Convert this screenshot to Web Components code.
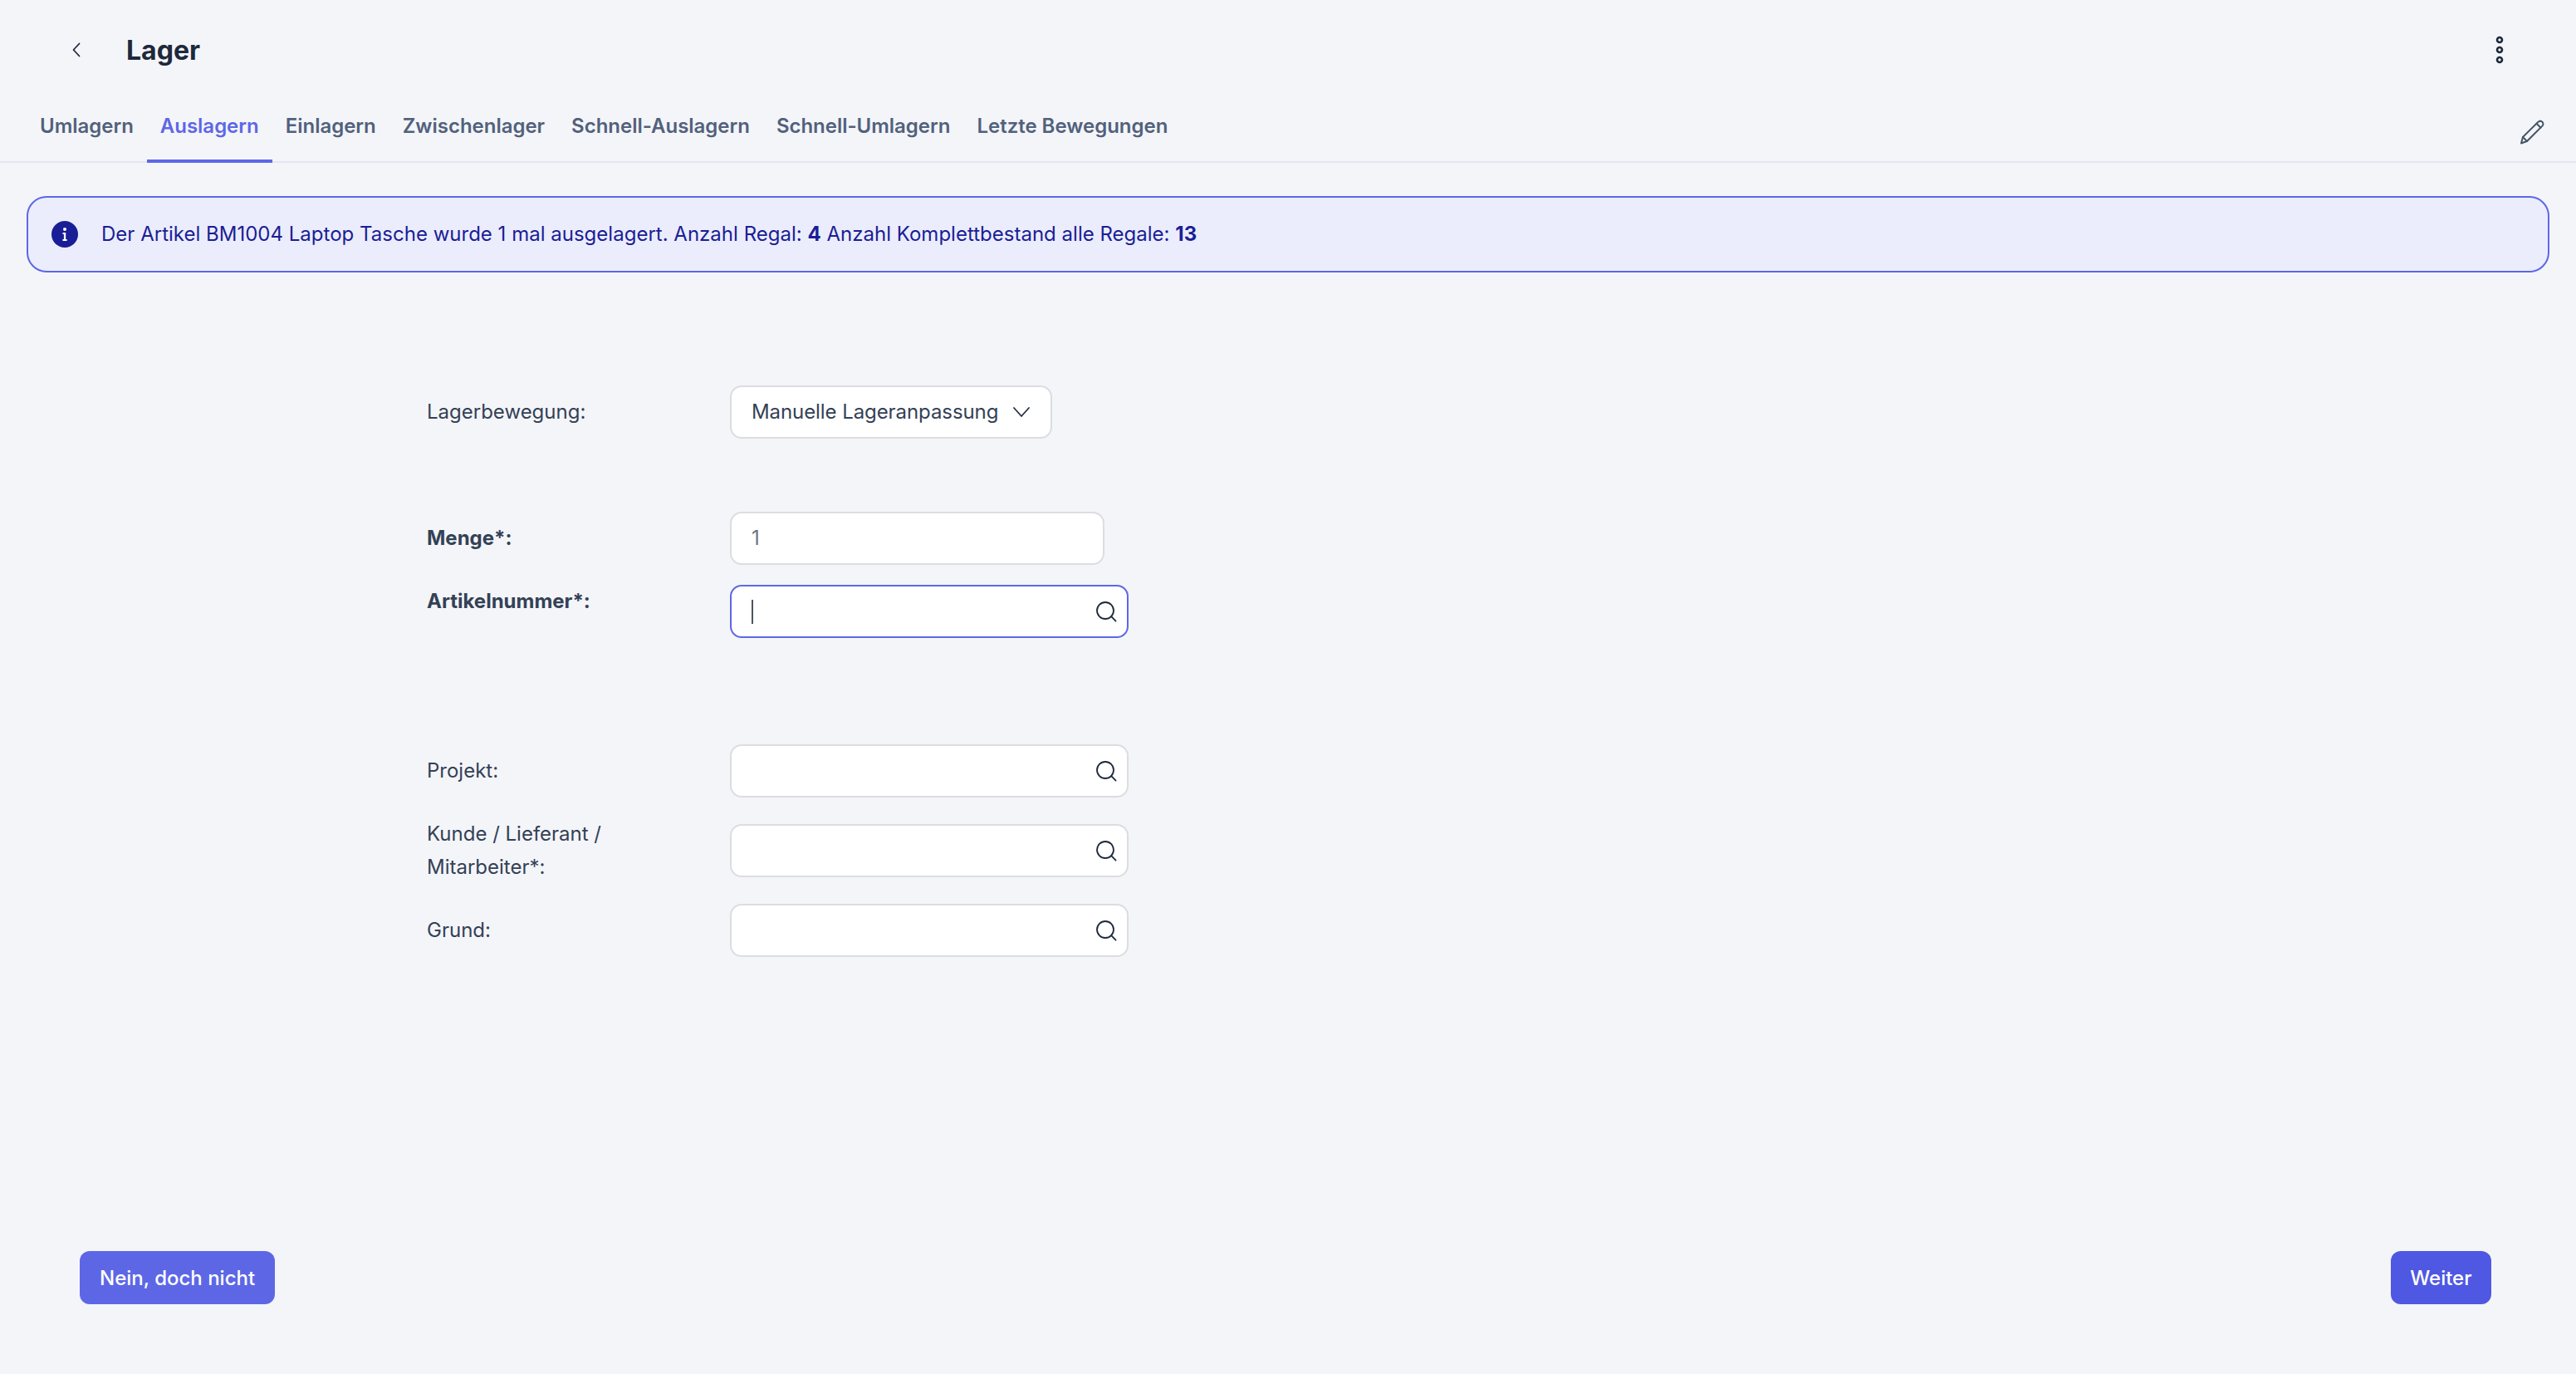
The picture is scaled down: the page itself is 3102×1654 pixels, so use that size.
<!DOCTYPE html>
<html lang="de">
<head>
<meta charset="utf-8">
<title>Lager</title>
<style>
  html, body { margin: 0; padding: 0; }
  body { background: #f4f5f9; font-family: Inter, "Noto Sans", sans-serif; }
</style>
</head>
<body>
<lager-page></lager-page>

<script>
const SEARCH_ICON = `<svg width="26" height="26" viewBox="0 0 26 26" fill="none" stroke="#1e293b" stroke-width="1.8" stroke-linecap="round"><circle cx="12" cy="12" r="10"/><path d="M19.2 19.2 L24.6 24.6"/></svg>`

class LagerHeader extends HTMLElement {
    constructor() {
        super()
        const shadow = this.attachShadow({ mode: "open" })
        shadow.innerHTML = `
        <style>
            :host { display: flex; align-items: center; height: 120px; padding: 0 86px 0 87px; box-sizing: border-box; }
            h1 { margin: 0 0 0 55px; font-size: 32px; font-weight: 650; color: #1e293b; flex: 1; }
            svg { display: block; }
        </style>
        <svg width="10" height="18" viewBox="0 0 10 18" fill="none" stroke="#1e293b" stroke-width="1.8" stroke-linecap="round" stroke-linejoin="round"><path d="M8.5 1.5 L1.5 9 L8.5 16.5"/></svg>
        <h1><slot></slot></h1>
        <svg width="12" height="36" viewBox="0 0 12 36" fill="none" stroke="#1e293b" stroke-width="2.6"><circle cx="6" cy="6" r="3"/><circle cx="6" cy="18" r="3"/><circle cx="6" cy="30" r="3"/></svg>
        `
    }
}

class LagerTabs extends HTMLElement {
    constructor() {
        super()
        const shadow = this.attachShadow({ mode: "open" })
        shadow.innerHTML = `
        <style>
            :host { display: flex; align-items: flex-start; height: 76px; padding: 0 38px 0 32px; box-sizing: border-box; border-bottom: 2px solid #e2e8f0; }
            nav { display: flex; flex: 1; }
            svg { display: block; margin-top: 24px; }
        </style>
        <nav><slot></slot></nav>
        <svg width="30" height="30" viewBox="0 0 30 30" fill="none" stroke="#475569" stroke-width="2" stroke-linejoin="round" stroke-linecap="round">
            <path d="M2 28.5 L4 21 L22.5 2.8 C24 1.4 26 1.4 27.4 2.8 C28.8 4.2 28.8 6.2 27.4 7.6 L9 26 Z"/>
            <path d="M4 21 L9 26 M20.5 4.8 L25.4 9.7"/>
        </svg>
        `
    }
}

class LagerTab extends HTMLElement {
    constructor() {
        super()
        const shadow = this.attachShadow({ mode: "open" })
        shadow.innerHTML = `
        <style>
            :host { display: block; height: 76px; padding: 15px 16px 0; box-sizing: border-box; font-size: 24px; line-height: 34px; font-weight: 600; letter-spacing: -0.02px; color: #51617c; white-space: nowrap; }
            :host([active]) { color: #5d67e6; border-bottom: 4px solid #5d67e6; }
        </style>
        <slot></slot>
        `
    }
}

class InfoBanner extends HTMLElement {
    constructor() {
        super()
        const shadow = this.attachShadow({ mode: "open" })
        shadow.innerHTML = `
        <style>
            :host { display: flex; align-items: center; gap: 28px; height: 92px; margin: 40px 32px 0; padding: 0 28px; box-sizing: border-box; background: #ebedfc; border: 2px solid #5d67e6; border-radius: 24px; font-size: 24px; letter-spacing: 0.01px; color: #1a1e96; white-space: nowrap; }
            svg { display: block; flex: none; }
            span { margin-bottom: 2px; }
        </style>
        <svg width="32" height="32" viewBox="0 0 32 32"><circle cx="16" cy="16" r="16" fill="#1a1e96"/><circle cx="16" cy="10" r="2" fill="#fff"/><path d="M13.5 14 H17.2 V22 H18.6 V24 H13.5 V22 H14.9 V16 H13.5 Z" fill="#fff"/></svg>
        <span><slot></slot></span>
        `
    }
}

class FormField extends HTMLElement {
    constructor() {
        super()
        const shadow = this.attachShadow({ mode: "open" })
        shadow.innerHTML = `
        <style>
            :host { display: grid; grid-template-columns: 365px auto; grid-template-rows: 64px; align-items: center; justify-content: start; height: 64px; font-size: 24px; line-height: 40px; color: #334155; }
            :host([strong]) { font-weight: 700; }
            :host([top]) .label { align-self: start; }
            .label { width: 240px; }
            ::slotted(*) { font-weight: 400; }
        </style>
        <div class="label"></div>
        <slot></slot>
        `
    }
    connectedCallback() {
        this.shadowRoot.querySelector(".label").textContent = this.getAttribute("label")
    }
}

class LookupInput extends HTMLElement {
    constructor() {
        super()
        const shadow = this.attachShadow({ mode: "open" })
        shadow.innerHTML = `
        <style>
            :host { display: flex; align-items: center; justify-content: flex-end; width: 480px; height: 64px; padding: 0 12px 0 24px; box-sizing: border-box; background: #fff; border: 2px solid #dcdde0; border-radius: 14px; }
            :host([focused]) { border-color: #5d67e6; justify-content: space-between; }
            .caret { display: none; width: 2px; height: 29px; background: #4b5563; }
            :host([focused]) .caret { display: block; }
            svg { display: block; }
        </style>
        <span class="caret"></span>
        ${SEARCH_ICON}
        `
    }
}

class QuantityInput extends HTMLElement {
    constructor() {
        super()
        const shadow = this.attachShadow({ mode: "open" })
        shadow.innerHTML = `
        <style>
            :host { display: flex; align-items: center; width: 451px; height: 64px; padding: 0 24px; box-sizing: border-box; background: #fff; border: 2px solid #dcdde0; border-radius: 14px; font-size: 24px; color: #6b7280; }
        </style>
        <slot></slot>
        `
    }
}

class SelectBox extends HTMLElement {
    constructor() {
        super()
        const shadow = this.attachShadow({ mode: "open" })
        shadow.innerHTML = `
        <style>
            :host { display: flex; align-items: center; justify-content: space-between; width: 388px; height: 64px; padding: 0 25px 0 24px; box-sizing: border-box; background: #fff; border: 2px solid #dcdde0; border-radius: 14px; font-size: 24px; letter-spacing: -0.08px; color: #334155; white-space: nowrap; }
            svg { display: block; }
        </style>
        <span><slot></slot></span>
        <svg width="20" height="12" viewBox="0 0 20 12" fill="none" stroke="#1e293b" stroke-width="1.7" stroke-linecap="round" stroke-linejoin="round"><path d="M1 1 L10 11 L19 1"/></svg>
        `
    }
}

class ActionButton extends HTMLElement {
    constructor() {
        super()
        const shadow = this.attachShadow({ mode: "open" })
        shadow.innerHTML = `
        <style>
            :host { display: flex; align-items: center; height: 64px; padding: 0 24px; box-sizing: border-box; background: #4f58e2; border-radius: 12px; color: #fff; font-size: 24px; font-weight: 500; white-space: nowrap; }
            :host([soft]) { background: #5d67e6; }
            :host(:not([soft])) { padding: 0 23.5px; }
        </style>
        <slot></slot>
        `
    }
}

class LagerPage extends HTMLElement {
    constructor() {
        super()
        const shadow = this.attachShadow({ mode: "open" })
        shadow.innerHTML = `
        <style>
            :host { display: flex; flex-direction: column; height: 1654px; font-family: Inter, "Noto Sans", sans-serif; }
            form { display: flex; flex-direction: column; margin: 136px 0 0 514px; }
            .after-select { margin-top: 88px; }
            .next { margin-top: 24px; }
            .group { margin-top: 128px; }
            .wide { margin-top: 32px; }
            footer { display: flex; justify-content: space-between; margin-top: auto; padding: 0 102px 84px 96px; }
        </style>
        <lager-header>Lager</lager-header>
        <lager-tabs>
            <lager-tab>Umlagern</lager-tab>
            <lager-tab active>Auslagern</lager-tab>
            <lager-tab>Einlagern</lager-tab>
            <lager-tab>Zwischenlager</lager-tab>
            <lager-tab>Schnell-Auslagern</lager-tab>
            <lager-tab>Schnell-Umlagern</lager-tab>
            <lager-tab>Letzte Bewegungen</lager-tab>
        </lager-tabs>
        <info-banner>Der Artikel BM1004 Laptop Tasche wurde 1 mal ausgelagert. Anzahl Regal: <b>4</b> Anzahl Komplettbestand alle Regale: <b>13</b></info-banner>
        <form>
            <form-field label="Lagerbewegung:"><select-box>Manuelle Lageranpassung</select-box></form-field>
            <form-field class="after-select" label="Menge*:" strong><quantity-input>1</quantity-input></form-field>
            <form-field class="next" label="Artikelnummer*:" strong top><lookup-input focused></lookup-input></form-field>
            <form-field class="group" label="Projekt:"><lookup-input></lookup-input></form-field>
            <form-field class="wide" label="Kunde / Lieferant / Mitarbeiter*:"><lookup-input></lookup-input></form-field>
            <form-field class="wide" label="Grund:"><lookup-input></lookup-input></form-field>
        </form>
        <footer>
            <action-button soft>Nein, doch nicht</action-button>
            <action-button>Weiter</action-button>
        </footer>
        `
    }
}

customElements.define('lager-header', LagerHeader)
customElements.define('lager-tabs', LagerTabs)
customElements.define('lager-tab', LagerTab)
customElements.define('info-banner', InfoBanner)
customElements.define('form-field', FormField)
customElements.define('lookup-input', LookupInput)
customElements.define('quantity-input', QuantityInput)
customElements.define('select-box', SelectBox)
customElements.define('action-button', ActionButton)
customElements.define('lager-page', LagerPage)
</script>
</body>
</html>
